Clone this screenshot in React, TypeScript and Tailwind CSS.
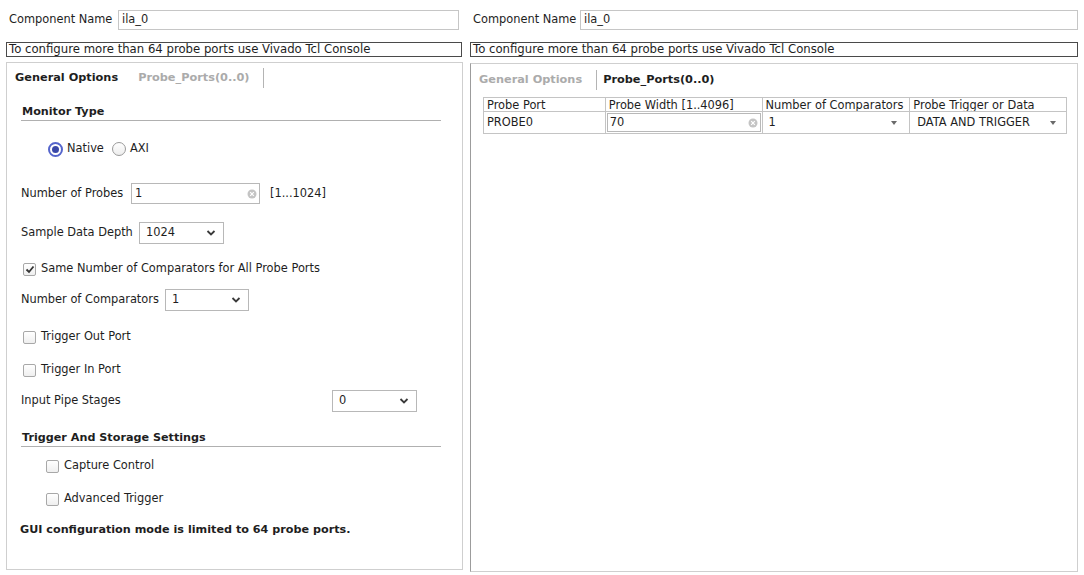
const font = "font-['DejaVu_Sans','Liberation_Sans',sans-serif]";

function Chevron() {
  return (
    <svg width="10" height="6" viewBox="0 0 10 6" className="shrink-0">
      <polyline points="1.5,1 5,4.5 8.5,1" fill="none" stroke="#3a3a3a" strokeWidth="1.8" />
    </svg>
  );
}

function ClearIcon() {
  return (
    <svg width="10" height="10" viewBox="0 0 10 10" className="shrink-0">
      <circle cx="5" cy="5" r="4.5" fill="#c4c4c4" />
      <path d="M3.2 3.2 L6.8 6.8 M6.8 3.2 L3.2 6.8" stroke="#fff" strokeWidth="1.2" />
    </svg>
  );
}

function TinyArrow() {
  return (
    <svg width="6" height="4" viewBox="0 0 6 4" className="shrink-0">
      <polygon points="0,0 6,0 3,4" fill="#6a6a6a" />
    </svg>
  );
}

function Select({ value, w }: { value: string; w: string }) {
  return (
    <div className={`${w} h-[22px] border border-[#b8b8b8] bg-white flex items-center justify-between pl-[6px] pr-[7px]`}>
      <span>{value}</span>
      <Chevron />
    </div>
  );
}

function Checkbox({ checked = false }: { checked?: boolean }) {
  return (
    <div className="w-[13px] h-[13px] rounded-[2px] border border-[#a8a8a8] bg-gradient-to-b from-white to-[#efefef] flex items-center justify-center shrink-0">
      {checked && (
        <svg width="10" height="9" viewBox="0 0 10 9">
          <polyline points="1.5,4.5 4,7 8.5,1.5" fill="none" stroke="#333" strokeWidth="1.8" />
        </svg>
      )}
    </div>
  );
}

function CheckRow({ label, checked, mt, indent }: { label: string; checked?: boolean; mt: string; indent: string }) {
  return (
    <div className={`${mt} ${indent} h-[14px] flex items-center gap-[5px]`}>
      <Checkbox checked={checked} />
      <span>{label}</span>
    </div>
  );
}

function Message() {
  return (
    <div className="mt-[12px] h-[15px] border border-[#4a4a4a] flex items-center pl-[2px] leading-[13px] text-[11.7px] whitespace-nowrap overflow-hidden">
      To configure more than 64 probe ports use Vivado Tcl Console
    </div>
  );
}

function GeneralOptions() {
  return (
    <div className="pl-[14px] pr-[21px]">
      <div className="mt-[16px] pb-[1px] border-b border-[#b0b0b0] font-bold text-[11.2px] leading-[14px] pl-[1px]">Monitor Type</div>

      <div className="mt-[20px] h-[16px] flex items-center pl-[27px]">
        <div className="w-[15px] h-[15px] rounded-full border-2 border-[#5565cc] bg-white flex items-center justify-center">
          <div className="w-[7px] h-[7px] rounded-full bg-[#3a48a8]" />
        </div>
        <span className="ml-[4px]">Native</span>
        <div className="ml-[8px] w-[14px] h-[14px] rounded-full border border-[#9a9a9a] bg-gradient-to-b from-white to-[#ededed]" />
        <span className="ml-[4px]">AXI</span>
      </div>

      <div className="mt-[26px] h-[21px] flex items-center">
        <span className="w-[110px] shrink-0">Number of Probes</span>
        <div className="w-[129px] h-[21px] border border-[#b8b8b8] flex items-center justify-between pl-[3px] pr-[2px]">
          <span>1</span>
          <ClearIcon />
        </div>
        <span className="ml-[10px]">[1...1024]</span>
      </div>

      <div className="mt-[18px] h-[22px] flex items-center">
        <span className="w-[118px] shrink-0">Sample Data Depth</span>
        <Select value="1024" w="w-[85px]" />
      </div>

      <CheckRow mt="mt-[18px]" indent="pl-[2px]" label="Same Number of Comparators for All Probe Ports" checked />

      <div className="mt-[13px] h-[22px] flex items-center">
        <span className="w-[144px] shrink-0">Number of Comparators</span>
        <Select value="1" w="w-[84px]" />
      </div>

      <CheckRow mt="mt-[19px]" indent="pl-[2px]" label="Trigger Out Port" />
      <CheckRow mt="mt-[19px]" indent="pl-[2px]" label="Trigger In Port" />

      <div className="mt-[13px] h-[22px] flex items-center">
        <span className="w-[311px] shrink-0">Input Pipe Stages</span>
        <Select value="0" w="w-[85px]" />
      </div>

      <div className="mt-[19px] pb-[1px] border-b border-[#b0b0b0] font-bold text-[11.2px] leading-[14px] pl-[1px]">Trigger And Storage Settings</div>

      <CheckRow mt="mt-[12px]" indent="pl-[25px]" label="Capture Control" />
      <CheckRow mt="mt-[19px]" indent="pl-[25px]" label="Advanced Trigger" />

      <div className="mt-[17px] leading-[14px] font-bold text-[11.2px] -ml-[1px]">GUI configuration mode is limited to 64 probe ports.</div>
    </div>
  );
}

const cols = ["w-[122px]", "w-[157px]", "w-[148px]", "w-[156px]"];

function ProbeTable() {
  return (
    <div className="ml-[12px] w-[584px] border border-[#c4c4c4]">
      <div className="flex h-[14px] border-b border-[#c4c4c4] leading-[14px]">
        {["Probe Port", "Probe Width [1..4096]", "Number of Comparators", "Probe Trigger or Data"].map((h, i) => (
          <div key={h} className={`${cols[i]} pl-[3px] ${i < 3 ? "border-r border-[#c4c4c4]" : ""} whitespace-nowrap overflow-hidden`}>{h}</div>
        ))}
      </div>
      <div className="flex h-[21px] items-center">
        <div className={`${cols[0]} h-full border-r border-[#c4c4c4] pl-[3px] flex items-center`}>PROBE0</div>
        <div className={`${cols[1]} h-full border-r border-[#c4c4c4] p-[1px]`}>
          <div className="h-full border border-[#b8b8b8] flex items-center justify-between pl-[2px] pr-[2px]">
            <span>70</span>
            <ClearIcon />
          </div>
        </div>
        <div className={`${cols[2]} h-full border-r border-[#c4c4c4] flex items-center justify-between pl-[6px] pr-[12px]`}>
          <span>1</span>
          <TinyArrow />
        </div>
        <div className={`${cols[3]} h-full flex items-center justify-between pl-[7px] pr-[10px]`}>
          <span>DATA AND TRIGGER</span>
          <TinyArrow />
        </div>
      </div>
    </div>
  );
}

export default function App() {
  return (
    <div className={`w-[1084px] h-[575px] bg-white flex gap-[7px] px-[6px] text-[11.4px] text-[#1e1e1e] ${font}`}>
      {/* left pane: general options */}
      <div className="w-[457px] flex flex-col">
        <div className="flex items-center h-[20px] mt-[10px]">
          <div className="w-[112px] pl-[3px] shrink-0 whitespace-nowrap">Component Name</div>
          <div className="w-[341px] h-[20px] border border-[#c6c6c6] flex items-center pl-[3px]">ila_0</div>
        </div>
        <div className="w-[456px]">
          <Message />
        </div>
        <div className="mt-[5px] mb-[5px] flex-1 border border-[#cfcfcf]">
          <div className="mt-[4px] h-[22px] flex items-center text-[11.3px]">
            <span className="ml-[8px] font-bold">General Options</span>
            <span className="ml-[20px] font-bold text-[#ababab]">Probe_Ports(0..0)</span>
            <div className="ml-[13px] w-px h-[20px] bg-[#b4b4b4]" />
          </div>
          <GeneralOptions />
        </div>
      </div>

      {/* right pane: probe ports */}
      <div className="flex-1 flex flex-col">
        <div className="flex items-center h-[20px] mt-[10px]">
          <div className="w-[110px] pl-[3px] shrink-0 whitespace-nowrap">Component Name</div>
          <div className="flex-1 h-[20px] border border-[#c6c6c6] flex items-center pl-[3px]">ila_0</div>
        </div>
        <Message />
        <div className="mt-[6px] mb-[3px] flex-1 border border-[#cfcfcf] border-l-[#9c9c9c]">
          <div className="mt-[5px] h-[22px] flex items-center text-[11.3px]">
            <span className="ml-[8px] font-bold text-[#ababab]">General Options</span>
            <div className="ml-[14px] w-px h-[20px] bg-[#b4b4b4]" />
            <span className="ml-[6px] font-bold">Probe_Ports(0..0)</span>
          </div>
          <div className="mt-[6px]">
            <ProbeTable />
          </div>
        </div>
      </div>
    </div>
  );
}
